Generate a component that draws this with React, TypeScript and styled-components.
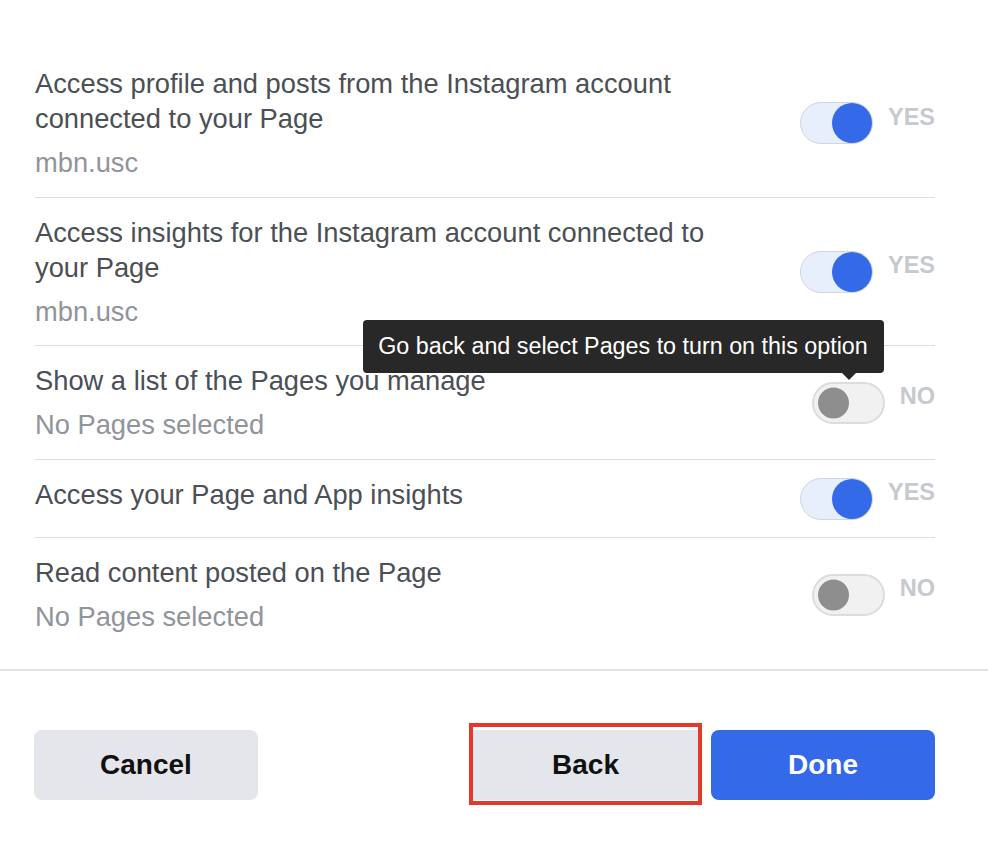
import React from "react";
import styled, { createGlobalStyle } from "styled-components";

const GlobalStyle = createGlobalStyle`
  html, body {
    margin: 0;
    padding: 0;
    background: #ffffff;
  }
  body {
    font-family: "Liberation Sans", Arial, Helvetica, sans-serif;
    -webkit-font-smoothing: antialiased;
  }
  * { box-sizing: border-box; }
`;

const Page = styled.div`
  width: 988px;
  min-height: 842px;
  padding-top: 49px;
  background: #ffffff;
`;

const List = styled.div`
  padding: 0 53px 0 35px;
`;

const Row = styled.div<{ $last?: boolean }>`
  display: flex;
  justify-content: space-between;
  align-items: flex-start;
  padding: 17px 0 ${(p) => (p.$last ? "35px" : "16.5px")};
  border-bottom: ${(p) => (p.$last ? "none" : "1px solid #dadde1")};
`;

const TextCol = styled.div`
  max-width: 710px;
  display: flex;
  flex-direction: column;
`;

const Title = styled.div`
  font-size: 27.3px;
  line-height: 35px;
  color: #4b4f56;
`;

const Sub = styled.div`
  margin-top: 9px;
  font-size: 27.3px;
  line-height: 35px;
  color: #90949c;
`;

const Control = styled.div`
  align-self: center;
  min-height: 44px;
  display: flex;
  align-items: center;
  gap: 15px;
`;

const SwitchTrack = styled.div<{ $on: boolean }>`
  position: relative;
  width: 73px;
  height: 42px;
  border-radius: 21px;
  background: ${(p) => (p.$on ? "#e7effd" : "#f1f1f1")};
  border: ${(p) => (p.$on ? "1.5px solid #cfd6e2" : "2px solid #dcdcdc")};
`;

const Knob = styled.span<{ $on: boolean }>`
  position: absolute;
  top: 50%;
  transform: translateY(-50%);
  border-radius: 50%;
  ${(p) =>
    p.$on
      ? `
    right: 0;
    width: 40px;
    height: 40px;
    background: #3469e7;
  `
      : `
    left: 4px;
    width: 31px;
    height: 31px;
    background: #8e8e8e;
  `}
`;

const StateLabel = styled.span`
  margin-bottom: 12px;
  font-size: 23.5px;
  font-weight: 700;
  color: #c6c9ce;
`;

const Tooltip = styled.div`
  position: absolute;
  right: -1px;
  bottom: calc(100% + 11px);
  white-space: nowrap;
  background: #282828;
  color: #ffffff;
  font-size: 23.3px;
  line-height: 29px;
  padding: 12px 16px 12px 15px;
  border-radius: 4px;
  z-index: 5;

  &::after {
    content: "";
    position: absolute;
    right: 28px;
    top: 100%;
    border-left: 7px solid transparent;
    border-right: 7px solid transparent;
    border-top: 7px solid #282828;
  }
`;

const Footer = styled.div`
  border-top: 2px solid #e3e3e7;
  padding: 59px 53px 42px 34px;
  display: flex;
  justify-content: space-between;
  align-items: center;
`;

const ButtonGroup = styled.div`
  display: flex;
  gap: 12px;
`;

const Button = styled.button<{ $primary?: boolean; $marked?: boolean }>`
  position: relative;
  width: ${(p) => (p.$marked ? "227px" : "224px")};
  height: 70px;
  border: none;
  border-radius: ${(p) => (p.$marked ? "2px" : "8px")};
  background: ${(p) => (p.$primary ? "#3469e7" : "#e4e6eb")};
  color: ${(p) => (p.$primary ? "#ffffff" : "#111111")};
  font-family: "Liberation Sans", Arial, Helvetica, sans-serif;
  font-size: 28px;
  font-weight: 700;
  cursor: pointer;

  ${(p) =>
    p.$marked
      ? `
    &::after {
      content: "";
      position: absolute;
      top: -7px;
      bottom: -5px;
      left: -3px;
      right: -3px;
      border: 4px solid #e2392b;
      pointer-events: none;
    }
  `
      : ""}
`;

type Perm = {
  title: string;
  sub?: string;
  on: boolean;
  tooltip?: string;
};

const perms: Perm[] = [
  {
    title: "Access profile and posts from the Instagram account connected to your Page",
    sub: "mbn.usc",
    on: true,
  },
  {
    title: "Access insights for the Instagram account connected to your Page",
    sub: "mbn.usc",
    on: true,
  },
  {
    title: "Show a list of the Pages you manage",
    sub: "No Pages selected",
    on: false,
    tooltip: "Go back and select Pages to turn on this option",
  },
  {
    title: "Access your Page and App insights",
    on: true,
  },
  {
    title: "Read content posted on the Page",
    sub: "No Pages selected",
    on: false,
  },
];

export default function App() {
  return (
    <Page>
      <GlobalStyle />
      <List>
        {perms.map((p, i) => (
          <Row key={i} $last={i === perms.length - 1}>
            <TextCol>
              <Title>{p.title}</Title>
              {p.sub && <Sub>{p.sub}</Sub>}
            </TextCol>
            <Control>
              <SwitchTrack $on={p.on}>
                <Knob $on={p.on} />
                {p.tooltip && <Tooltip>{p.tooltip}</Tooltip>}
              </SwitchTrack>
              <StateLabel>{p.on ? "YES" : "NO"}</StateLabel>
            </Control>
          </Row>
        ))}
      </List>
      <Footer>
        <Button>Cancel</Button>
        <ButtonGroup>
          <Button $marked>Back</Button>
          <Button $primary>Done</Button>
        </ButtonGroup>
      </Footer>
    </Page>
  );
}
